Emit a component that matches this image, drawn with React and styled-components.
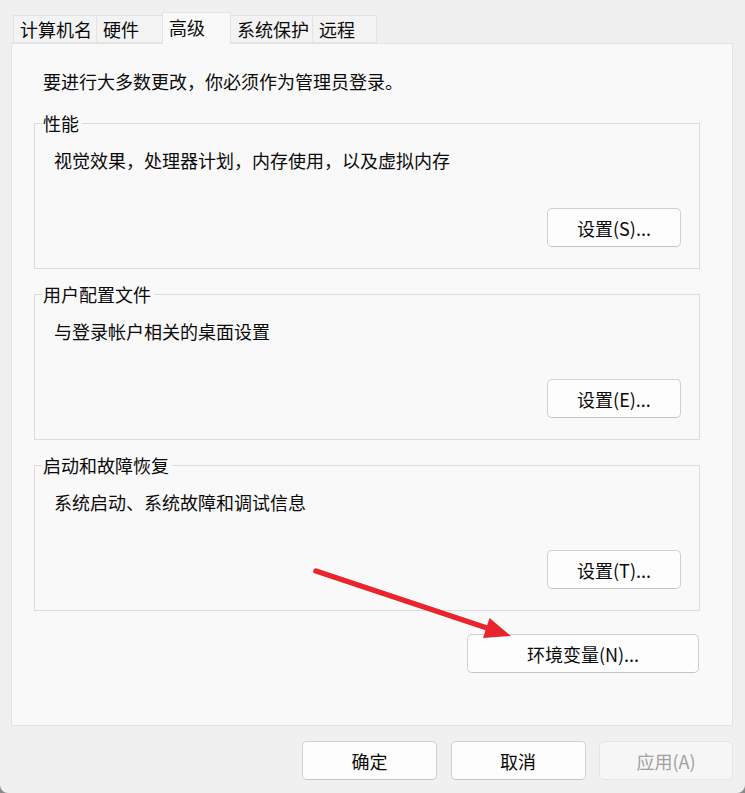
import styled, { createGlobalStyle } from "styled-components";

const GlobalStyle = createGlobalStyle`
  html, body {
    margin: 0;
    padding: 0;
    background: #8a8a8a;
  }
  * {
    box-sizing: border-box;
  }
`;

const Window = styled.div`
  position: relative;
  width: 745px;
  height: 793px;
  background: #f0f0f0;
  border-radius: 0 0 8px 8px;
  padding: 12px 12px 0 11px;
  font-family: "Noto Sans CJK SC", "Microsoft YaHei UI", sans-serif;
  font-size: 18px;
  line-height: 24px;
  color: #0a0a0a;
  overflow: hidden;
`;

const TabStrip = styled.div`
  display: flex;
  align-items: flex-end;
  height: 31px;
  padding-left: 2px;
`;

const Tab = styled.div`
  position: relative;
  width: ${({ w }) => w}px;
  height: ${({ active }) => (active ? 32 : 28)}px;
  margin-left: -1px;
  margin-bottom: ${({ active }) => (active ? "-1px" : "0")};
  padding: ${({ active }) => (active ? "2px 0 0 6px" : "1px 0 0 6px")};
  background: ${({ active }) => (active ? "#f9f9f9" : "#f3f3f3")};
  border: 1px solid #e3e3e3;
  border-bottom: ${({ active }) => (active ? "none" : "1px solid #e3e3e3")};
  z-index: ${({ active }) => (active ? 2 : 1)};
  white-space: nowrap;
  &:first-child {
    margin-left: 0;
  }
`;

const Panel = styled.div`
  display: flex;
  flex-direction: column;
  height: 683px;
  background: #f9f9f9;
  border: 1px solid #e3e3e3;
  padding: 25px 32px 0 22px;
`;

const Intro = styled.div`
  margin-left: 9px;
  margin-bottom: 18px;
`;

const GroupBox = styled.fieldset`
  margin: 0 0 13px 0;
  padding: 0;
  border: 1px solid #dcdcdc;
  min-width: 0;
`;

const GroupTitle = styled.legend`
  margin-left: 7px;
  padding: 0 3px 0 1px;
  line-height: 24px;
`;

const GroupBody = styled.div`
  display: flex;
  flex-direction: column;
  padding: 13px 18px 21px 19px;
`;

const Description = styled.div`
  margin-bottom: 36px;
`;

const ButtonRow = styled.div`
  display: flex;
  justify-content: flex-end;
  gap: ${({ gap }) => gap || 0}px;
`;

const Button = styled.button`
  width: ${({ w }) => w}px;
  height: 39px;
  padding: 0;
  font-family: inherit;
  font-size: 18px;
  line-height: 24px;
  color: ${({ disabled }) => (disabled ? "#a0a0a0" : "#0a0a0a")};
  background: ${({ disabled }) => (disabled ? "#f6f6f6" : "#fdfdfd")};
  border: 1px solid ${({ disabled }) => (disabled ? "#e6e6e6" : "#d0d0d0")};
  border-bottom-color: ${({ disabled }) => (disabled ? "#e6e6e6" : "#c4c4c4")};
  border-radius: 5px;
  cursor: ${({ disabled }) => (disabled ? "default" : "pointer")};
`;

const EnvRow = styled(ButtonRow)`
  margin-top: 10px;
  padding-right: 1px;
`;

const Footer = styled(ButtonRow)`
  margin-top: 15px;
`;

const ArrowLayer = styled.svg`
  position: absolute;
  left: 0;
  top: 0;
  pointer-events: none;
`;

const groups = [
  { title: "性能", text: "视觉效果，处理器计划，内存使用，以及虚拟内存", button: "设置(S)..." },
  { title: "用户配置文件", text: "与登录帐户相关的桌面设置", button: "设置(E)..." },
  { title: "启动和故障恢复", text: "系统启动、系统故障和调试信息", button: "设置(T)..." },
];

const tabs = [
  { label: "计算机名", w: 84 },
  { label: "硬件", w: 67 },
  { label: "高级", w: 69, active: true },
  { label: "系统保护", w: 83 },
  { label: "远程", w: 65 },
];

export default function App() {
  return (
    <>
      <GlobalStyle />
      <Window>
        <TabStrip>
          {tabs.map((t) => (
            <Tab key={t.label} w={t.w} active={t.active}>
              {t.label}
            </Tab>
          ))}
        </TabStrip>
        <Panel>
          <Intro>要进行大多数更改，你必须作为管理员登录。</Intro>
          {groups.map((g) => (
            <GroupBox key={g.title}>
              <GroupTitle>{g.title}</GroupTitle>
              <GroupBody>
                <Description>{g.text}</Description>
                <ButtonRow>
                  <Button w={134}>{g.button}</Button>
                </ButtonRow>
              </GroupBody>
            </GroupBox>
          ))}
          <EnvRow>
            <Button w={232}>环境变量(N)...</Button>
          </EnvRow>
        </Panel>
        <Footer gap={13.5}>
          <Button w={135}>确定</Button>
          <Button w={135}>取消</Button>
          <Button w={134} disabled>
            应用(A)
          </Button>
        </Footer>
        <ArrowLayer width="745" height="793" viewBox="0 0 745 793">
          <line
            x1="316"
            y1="571"
            x2="490"
            y2="629"
            stroke="#e8242c"
            strokeWidth="5.5"
            strokeLinecap="round"
          />
          <polygon points="511,636 489.5,618 483,638" fill="#e8242c" />
        </ArrowLayer>
      </Window>
    </>
  );
}
